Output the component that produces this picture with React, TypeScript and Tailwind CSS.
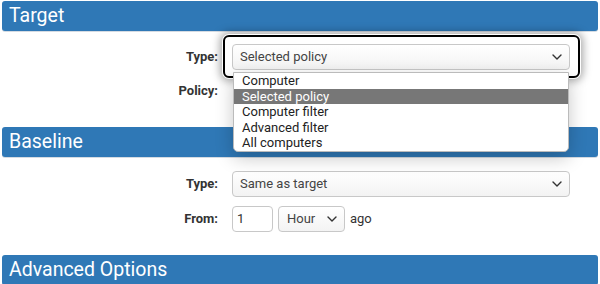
import React from "react";

function Chevron({ className = "" }: { className?: string }) {
  return (
    <svg className={className} width="10" height="6" viewBox="0 0 10 6" fill="none">
      <polyline points="1,1 5,5 9,1" stroke="#333" strokeWidth="1.4" strokeLinecap="round" strokeLinejoin="round" />
    </svg>
  );
}

function Bar({ children }: { children: React.ReactNode }) {
  return (
    <div className="h-[30px] bg-[#2f78b6] rounded-[3px] shadow-[0_1px_0_#d5dbe2] flex items-center pl-[7px] text-white text-[19.5px] leading-none">
      {children}
    </div>
  );
}

function Label({ children }: { children: React.ReactNode }) {
  return <div className="w-[216px] text-right text-[13px] font-bold text-[#333]">{children}</div>;
}

function SelectBox({ text, className = "" }: { text: string; className?: string }) {
  return (
    <div
      className={
        "h-[26px] border border-[#c8c8c8] rounded-[4px] bg-gradient-to-b from-white to-[#f3f3f3] flex items-center justify-between pl-[7px] pr-[7px] text-[13px] text-[#444] " +
        className
      }
    >
      <span>{text}</span>
      <Chevron />
    </div>
  );
}

export default function App() {
  const items = ["Computer", "Selected policy", "Computer filter", "Advanced filter", "All computers"];
  return (
    <div className="w-[600px] h-[284px] bg-white overflow-hidden font-['Roboto',sans-serif] px-[2px] pt-px">
      <Bar>Target</Bar>
      <div className="flex items-center mt-[13px] h-[26px]">
        <Label>Type:</Label>
        <div className="ml-[14px] w-[338px] relative">
          <div className="absolute left-[-9px] top-[-9px] w-[357px] h-[43px] rounded-[6px] border-2 border-black shadow-[0_0_0_1px_#fff,0_0_8px_3px_rgba(0,0,0,0.35)] bg-white" />
          <SelectBox text="Selected policy" className="relative" />
          <div className="absolute left-[1px] top-[28px] w-[336px] z-10 bg-white border border-[#bbb] rounded-b-[5px] shadow-[0_6px_18px_rgba(0,0,0,0.22)] text-[13px] text-[#222] overflow-hidden">
            {items.map((it) =>
              it === "Selected policy" ? (
                <div key={it} className="h-[15.5px] leading-[15.5px] pl-[8px] bg-[#777] text-white">
                  {it}
                </div>
              ) : (
                <div key={it} className="h-[15.5px] leading-[15.5px] pl-[8px]">
                  {it}
                </div>
              )
            )}
          </div>
        </div>
      </div>
      <div className="flex items-center mt-[8px] h-[26px]">
        <Label>Policy:</Label>
      </div>
      <div className="mt-[23px]">
        <Bar>Baseline</Bar>
      </div>
      <div className="flex items-center mt-[14px] h-[26px]">
        <Label>Type:</Label>
        <SelectBox text="Same as target" className="ml-[14px] w-[338px]" />
      </div>
      <div className="flex items-center mt-[9px] h-[26px]">
        <Label>From:</Label>
        <div className="ml-[14px] flex items-center">
          <div className="w-[41px] h-[26px] border border-[#c8c8c8] rounded-[4px] flex items-center pl-[4px] text-[13px] text-[#333]">1</div>
          <SelectBox text="Hour" className="ml-[5px] w-[67px] pl-[8px]" />
          <span className="ml-[5px] text-[13px] text-[#333]">ago</span>
        </div>
      </div>
      <div className="mt-[23px]">
        <Bar>Advanced Options</Bar>
      </div>
    </div>
  );
}
